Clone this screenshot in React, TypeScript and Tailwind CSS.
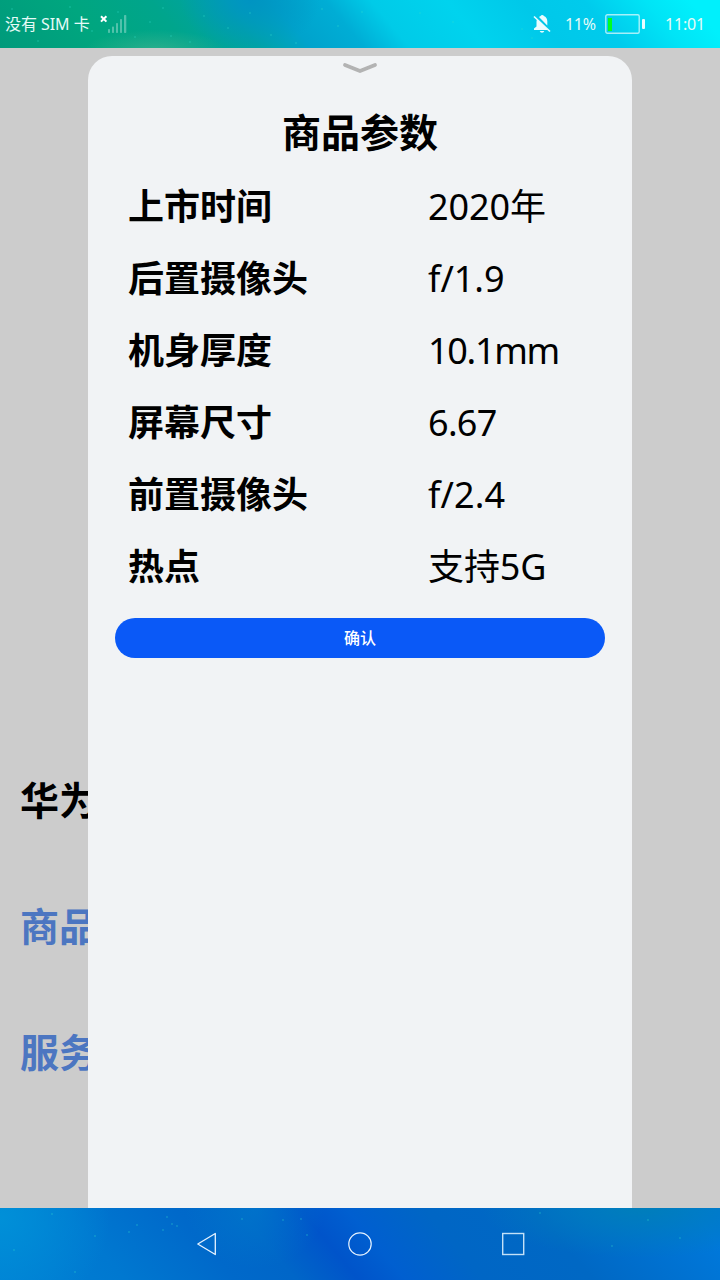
import React from "react";

const specs = [
  { label: "上市时间", value: "2020年", tracking: "tracking-[-0.1px]" },
  { label: "后置摄像头", value: "f/1.9", tracking: "tracking-normal" },
  { label: "机身厚度", value: "10.1mm", tracking: "tracking-[-1.3px]" },
  { label: "屏幕尺寸", value: "6.67", tracking: "tracking-[-0.7px]" },
  { label: "前置摄像头", value: "f/2.4", tracking: "tracking-[0.1px]" },
  { label: "热点", value: "支持5G", tracking: "tracking-[-0.1px]" },
];

const topSpecks = [[12, 9], [38, 41], [70, 7], [92, 31], [118, 12], [135, 37], [150, 22], [163, 8], [171, 36], [190, 42], [204, 16], [228, 28], [250, 13], [271, 35], [296, 43], [322, 9], [338, 26], [362, 12], [420, 13], [453, 22], [522, 29], [532, 38]];
const bottomSpecks = [[14, 42], [52, 6], [95, 28], [129, 24], [137, 17], [163, 22], [167, 9], [172, 16], [177, 18], [242, 11], [283, 12], [301, 11], [307, 27], [540, 5], [612, 38], [648, 12], [680, 30], [75, 64]];

function Specks({ points, className }: { points: number[][]; className: string }) {
  return (
    <svg className={className} aria-hidden="true">
      {points.map(([x, y]) => (
        <circle key={`${x}-${y}`} cx={x} cy={y} r="0.8" fill="#35dfd0" opacity="0.5" />
      ))}
    </svg>
  );
}

function StatusBar() {
  return (
    <header className="relative flex h-12 shrink-0 items-center bg-[radial-gradient(ellipse_70px_20px_at_155px_50px,#3cb38fb0,transparent),radial-gradient(ellipse_70px_50px_at_250px_0px,#0094c2,transparent),linear-gradient(50deg,#009a7b_0%,#00a67f_14%,#00a58c_25%,#00a3a5_34%,#00a3cc_41%,#00add5_48%,#00cbe8_54%,#00d3ee_64%,#00c8e9_74%,#00cbec_82%,#00e4f6_90%,#00f0fc_96%)] text-[#e5faf7]">
      <Specks points={topSpecks} className="absolute inset-0 h-full w-full" />
      <span className="ml-[5px] w-[86px] whitespace-nowrap text-[16px] leading-6 tracking-[-0.05px]">没有 SIM 卡</span>
      <svg width="30" height="20" viewBox="0 0 30 20" className="ml-2" aria-hidden="true">
        <path d="M2 2.2 7.4 7.6M7.4 2.2 2 7.6" stroke="#fff" strokeWidth="2" />
        <g fill="#fff" opacity="0.32">
          <rect x="9" y="15" width="2" height="4" rx="0.7" />
          <rect x="13" y="12.5" width="2" height="6.5" rx="0.7" />
          <rect x="17" y="9" width="2" height="10" rx="0.7" />
          <rect x="21" y="5" width="2" height="14" rx="0.7" />
          <rect x="25" y="1" width="2.3" height="18" rx="0.7" />
        </g>
      </svg>
      <svg width="20" height="22" viewBox="0 0 20 22" className="ml-auto" aria-hidden="true">
        <path d="M5.2 6.2 16 17H2v-1.4l2.5-2.2V8.7c0-.9.2-1.7.7-2.5ZM7 4c.5-.4 1-.7 1.6-.9a1.8 1.8 0 0 1 3.3 0c2.1.8 3.4 2.8 3.4 5.2v4.1ZM7.7 18h4.6a2.4 2.4 0 0 1-4.6 0Z" fill="#e9fcff" />
        <path d="m2 3.5 16 15" stroke="#e9fcff" strokeWidth="1.6" />
      </svg>
      <span className="ml-[13px] w-[32px] whitespace-nowrap text-[16px] leading-6 tracking-[-0.3px]">11%</span>
      <svg width="41" height="20" viewBox="0 0 41 20" className="ml-2" aria-hidden="true">
        <rect x="0.8" y="0.8" width="33.4" height="18.4" rx="1.5" fill="none" stroke="#fff" strokeOpacity="0.65" strokeWidth="1.4" />
        <rect x="3" y="4" width="4" height="13" fill="#00ff1e" />
        <rect x="37" y="5" width="3" height="10" rx="1" fill="#e9fcff" />
      </svg>
      <span className="ml-[19px] mr-[14px] w-[41px] whitespace-nowrap text-[16px] leading-6 tracking-[-0.2px]">11:01</span>
    </header>
  );
}

function NavigationBar() {
  return (
    <nav className="relative flex h-[72px] shrink-0 items-center bg-[radial-gradient(ellipse_110px_100px_at_0px_10px,#0090d8,transparent),radial-gradient(ellipse_160px_50px_at_640px_0px,#007ebb,transparent),radial-gradient(ellipse_70px_60px_at_255px_0px,#0079cbb0,transparent),linear-gradient(50deg,#0080d4_0%,#0078d0_16%,#0069ca_30%,#0066c8_38%,#0054ca_46%,#005fd0_52%,#0066c5_62%,#0068c4_76%,#0078da_96%)] pl-[194px]">
      <Specks points={bottomSpecks} className="absolute inset-0 h-full w-full" />
      <div className="relative flex w-[332px] items-center justify-between">
        <svg width="26" height="26" viewBox="0 0 26 26" aria-label="返回">
          <path d="M21.3 2.5v21L3.8 13Z" fill="none" stroke="#e6f3ff" strokeWidth="1.3" strokeLinejoin="round" />
        </svg>
        <svg width="26" height="26" viewBox="0 0 26 26" aria-label="主页">
          <circle cx="13" cy="13" r="11.2" fill="none" stroke="#e6f3ff" strokeWidth="1.2" />
        </svg>
        <svg width="26" height="26" viewBox="0 0 26 26" aria-label="最近任务">
          <rect x="2.7" y="2.5" width="21" height="21" fill="none" stroke="#c4e1f7" strokeWidth="1.4" />
        </svg>
      </div>
    </nav>
  );
}

export default function App() {
  return (
    <div className="flex h-[1280px] w-[720px] flex-col overflow-hidden font-['Noto_Sans','Noto_Sans_CJK_SC',sans-serif]">
      <StatusBar />
      <main className="flex min-h-0 flex-1 bg-[#cccccc]">
        <aside className="w-[88px] shrink-0 overflow-hidden whitespace-nowrap pl-5 pt-[722px] text-[39px] font-bold text-[#4c76c1]">
          <p className="h-[126px] leading-[60px] text-black">华为</p>
          <p className="h-[126px] leading-[60px]">商品</p>
          <p className="leading-[60px]">服务</p>
        </aside>
        <section className="mt-2 flex w-[544px] shrink-0 flex-col rounded-t-[24px] bg-[#f1f3f5] text-black">
          <div className="flex h-6 justify-center pt-[6px]">
            <svg width="36" height="12" viewBox="0 0 36 12" aria-hidden="true">
              <path d="m3 3 15 6 15-6" fill="none" stroke="#b3b3b3" strokeWidth="3.8" strokeLinecap="round" strokeLinejoin="round" />
            </svg>
          </div>
          <h1 className="mt-[22px] h-[60px] text-center text-[39px] font-bold leading-[60px]">商品参数</h1>
          <dl className="mt-[9px] pl-10">
            {specs.map((spec) => (
              <div key={spec.label} className="flex h-[72px] items-center text-[36px] leading-[72px]">
                <dt className="w-[300px] font-bold">{spec.label}</dt>
                <dd className={spec.tracking}>{spec.value}</dd>
              </div>
            ))}
          </dl>
          <button className="mx-[27px] mt-[15px] h-10 rounded-full bg-[#0a59f7] text-[16px] font-medium text-white">确认</button>
        </section>
      </main>
      <NavigationBar />
    </div>
  );
}
